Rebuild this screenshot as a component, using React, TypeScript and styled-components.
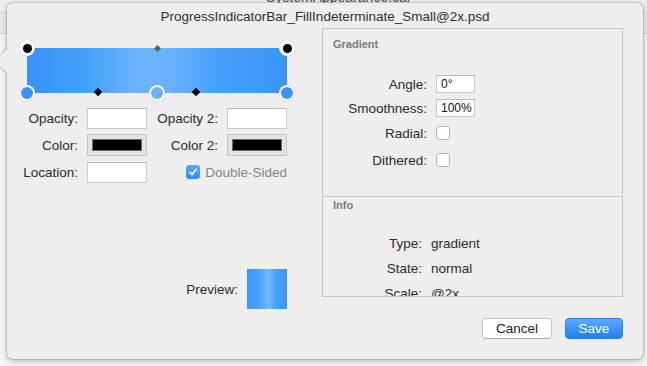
import React from "react";
import styled, { createGlobalStyle } from "styled-components";

const Global = createGlobalStyle`
  html, body { margin: 0; padding: 0; }
  body {
    width: 647px; height: 366px; overflow: hidden;
    background: #e4e4e4;
    font-family: "Liberation Sans", Arial, Helvetica, sans-serif;
    color: #2b2b2b;
  }
  #root { width: 647px; height: 366px; }
`;

const Stage = styled.div`
  position: relative;
  width: 647px;
  height: 366px;
  overflow: hidden;
  background: linear-gradient(#ececec 0 12px, #d6d6d6 12px 13px, #e9e9e9 13px 33px, #cfcfcf 33px 34px, #f4f4f4 34px);
`;

const BackdropTitle = styled.div`
  margin-top: -11px;
  padding-left: 266px;
  font-size: 14px;
  line-height: 16px;
  color: #4a4a4a;
`;

const Popover = styled.div`
  position: absolute;
  left: 7px;
  top: 3px;
  width: 636px;
  height: 356px;
  box-sizing: border-box;
  padding: 0 20px;
  background: #eeeeee;
  border-radius: 6px;
  box-shadow: 0 0 0 1px rgba(0,0,0,0.12), 0 2px 6px rgba(0,0,0,0.25);
  display: flex;
  flex-direction: column;
`;

const Arrow = styled.div`
  position: absolute;
  left: -8px;
  top: 49px;
  width: 18px;
  height: 18px;
  background: #eeeeee;
  transform: rotate(45deg);
  box-shadow: -1px 1px 2px rgba(0,0,0,0.18);
  border-radius: 2px;
  z-index: 0;
`;

const Title = styled.div`
  position: relative;
  height: 25px;
  line-height: 28px;
  text-align: center;
  font-size: 13.5px;
  color: #2e2e2e;
`;

const Body = styled.div`
  position: relative;
  display: flex;
  align-items: flex-start;
  gap: 35px;
`;

const LeftColumn = styled.div`
  width: 260px;
  display: flex;
  flex-direction: column;
`;

const BarWrap = styled.div`
  position: relative;
  margin-top: 20px;
  width: 260px;
  height: 45px;
`;

const Bar = styled.div`
  width: 100%;
  height: 100%;
  background: linear-gradient(90deg, #3a92f8 0%, #42a0fb 22%, #6db4fd 44%, #66b0fd 56%, #45a0fb 74%, #3b94f8 100%);
`;

const RingHandle = styled.div<{ $x: number; $y: number; $inner: string; $innerSize: number }>`
  position: absolute;
  left: ${(p) => p.$x - 8}px;
  top: ${(p) => p.$y - 8}px;
  width: 16px;
  height: 16px;
  border-radius: 50%;
  background: #ffffff;
  box-shadow: 0 0 1px rgba(0,0,0,0.35);
  display: flex;
  align-items: center;
  justify-content: center;
  &::after {
    content: "";
    width: ${(p) => p.$innerSize}px;
    height: ${(p) => p.$innerSize}px;
    border-radius: 50%;
    background: ${(p) => p.$inner};
  }
`;

const Diamond = styled.div<{ $x: number; $y: number; $color: string; $size: number }>`
  position: absolute;
  left: ${(p) => p.$x - p.$size / 2}px;
  top: ${(p) => p.$y - p.$size / 2}px;
  width: ${(p) => p.$size}px;
  height: ${(p) => p.$size}px;
  background: ${(p) => p.$color};
  transform: rotate(45deg);
`;

const FormGrid = styled.div`
  margin-top: 14px;
  display: grid;
  grid-template-columns: 60px 60px 80px 60px;
  grid-auto-rows: 22px;
  row-gap: 5px;
  align-items: center;
`;

const Label = styled.div`
  justify-self: end;
  white-space: nowrap;
  padding-right: 9px;
  font-size: 13.5px;
  color: #2b2b2b;
`;

const TextInput = styled.div<{ $w?: number; $h?: number }>`
  box-sizing: border-box;
  width: ${(p) => p.$w ?? 60}px;
  height: ${(p) => p.$h ?? 21}px;
  background: #ffffff;
  border: 1px solid #c9c9c9;
  border-top-color: #b9b9b9;
  font-size: 12px;
  line-height: ${(p) => (p.$h ?? 21) - 2}px;
  padding-left: 4px;
  color: #111;
`;

const ColorWell = styled.div`
  box-sizing: border-box;
  width: 60px;
  height: 22px;
  background: #e2e2e2;
  border: 1px solid #c4c4c4;
  padding: 4px;
  display: flex;
  &::after {
    content: "";
    flex: 1;
    background: #000;
    border: 1px solid #6a6a6a;
  }
`;

const CheckRow = styled.div`
  grid-column: 3 / 5;
  justify-self: end;
  display: flex;
  align-items: center;
  gap: 5px;
  font-size: 13.5px;
  color: #858585;
`;

const BlueCheck = styled.div`
  width: 14px;
  height: 14px;
  border-radius: 3px;
  background: linear-gradient(#5aa9fb, #2f8cf6);
  display: flex;
  align-items: center;
  justify-content: center;
`;

const PreviewRow = styled.div`
  margin-top: 86px;
  display: flex;
  justify-content: flex-end;
  align-items: center;
  gap: 9px;
  font-size: 13.5px;
`;

const PreviewSwatch = styled.div`
  width: 40px;
  height: 40px;
  background: linear-gradient(90deg, #3b95f9 0%, #4aa3fc 30%, #72b8fe 55%, #4aa3fc 70%, #3b96fa 100%);
`;

const InfoBox = styled.div`
  width: 301px;
  height: 269px;
  box-sizing: border-box;
  border: 1px solid #c6c6c6;
  display: flex;
  flex-direction: column;
  overflow: hidden;
`;

const Section = styled.div<{ $h?: number; $pt: number }>`
  box-sizing: border-box;
  ${(p) => (p.$h ? `height: ${p.$h}px; flex: none;` : "flex: 1; min-height: 0;")}
  padding-top: ${(p) => p.$pt}px;
  overflow: hidden;
  & + & { border-top: 1px solid #c6c6c6; }
`;

const SectionHeader = styled.div`
  padding-left: 10px;
  font-size: 11px;
  line-height: 13px;
  font-weight: bold;
  color: #7a7a7a;
`;

const PropGrid = styled.div<{ $labelW: number; $mt: number; $rows: string; $gap: number }>`
  margin-top: ${(p) => p.$mt}px;
  display: grid;
  grid-template-columns: ${(p) => p.$labelW}px 1fr;
  grid-template-rows: ${(p) => p.$rows};
  column-gap: 9px;
  row-gap: ${(p) => p.$gap}px;
  align-items: center;
  font-size: 13.5px;
`;

const PropLabel = styled.div`
  justify-self: end;
  white-space: nowrap;
`;

const PlainCheck = styled.div`
  box-sizing: border-box;
  width: 14px;
  height: 14px;
  border-radius: 3px;
  background: #fff;
  border: 1px solid #b4b4b4;
`;

const Footer = styled.div`
  margin-top: 9px;
  display: flex;
  justify-content: flex-end;
  gap: 13px;
`;

const Button = styled.button<{ $primary?: boolean; $w: number }>`
  width: ${(p) => p.$w}px;
  height: 21px;
  box-sizing: border-box;
  border-radius: 4px;
  font-family: inherit;
  font-size: 13.5px;
  padding: 0;
  line-height: 19px;
  cursor: default;
  ${(p) =>
    p.$primary
      ? `background: linear-gradient(#5eabfd, #1c80f5); color: #fff; border: 1px solid #2a80ea;`
      : `background: #fff; color: #222; border: 1px solid #c4c4c4; border-bottom-color: #aaaaaa;`}
`;

export default function App() {
  return (
    <>
      <Global />
      <Stage>
        <BackdropTitle>SystemAppearance.car</BackdropTitle>
        <Popover>
          <Arrow />
          <Title>ProgressIndicatorBar_FillIndeterminate_Small@2x.psd</Title>
          <Body>
            <LeftColumn>
              <BarWrap>
                <Bar />
                <RingHandle $x={0} $y={0} $inner="#000" $innerSize={9} />
                <RingHandle $x={260} $y={0} $inner="#000" $innerSize={9} />
                <Diamond $x={130} $y={0} $color="#5a5f66" $size={5} />
                <RingHandle $x={0} $y={45} $inner="#3a92f8" $innerSize={12} />
                <RingHandle $x={130} $y={45} $inner="#68b1fd" $innerSize={12} />
                <RingHandle $x={260} $y={45} $inner="#3b94f8" $innerSize={12} />
                <Diamond $x={71} $y={44} $color="#000" $size={6} />
                <Diamond $x={169} $y={44} $color="#000" $size={6} />
              </BarWrap>
              <FormGrid>
                <Label>Opacity:</Label>
                <TextInput />
                <Label>Opacity 2:</Label>
                <TextInput />
                <Label>Color:</Label>
                <ColorWell />
                <Label>Color 2:</Label>
                <ColorWell />
                <Label>Location:</Label>
                <TextInput />
                <CheckRow>
                  <BlueCheck>
                    <svg width="10" height="10" viewBox="0 0 10 10">
                      <path d="M2 5.2 L4.2 7.6 L8.2 2.2" fill="none" stroke="#fff" strokeWidth="1.6" strokeLinecap="round" strokeLinejoin="round" />
                    </svg>
                  </BlueCheck>
                  Double-Sided
                </CheckRow>
              </FormGrid>
              <PreviewRow>
                Preview:
                <PreviewSwatch />
              </PreviewRow>
            </LeftColumn>
            <InfoBox>
              <Section $h={167} $pt={9}>
                <SectionHeader>Gradient</SectionHeader>
                <PropGrid $labelW={104} $mt={24} $rows="18px 18px 20px 22px" $gap={6}>
                  <PropLabel>Angle:</PropLabel>
                  <TextInput $w={39} $h={18}>0°</TextInput>
                  <PropLabel>Smoothness:</PropLabel>
                  <TextInput $w={39} $h={18}>100%</TextInput>
                  <PropLabel>Radial:</PropLabel>
                  <PlainCheck />
                  <PropLabel>Dithered:</PropLabel>
                  <PlainCheck />
                </PropGrid>
              </Section>
              <Section $pt={2}>
                <SectionHeader>Info</SectionHeader>
                <PropGrid $labelW={99} $mt={19} $rows="25px 25px 25px" $gap={0}>
                  <PropLabel>Type:</PropLabel>
                  <div>gradient</div>
                  <PropLabel>State:</PropLabel>
                  <div>normal</div>
                  <PropLabel>Scale:</PropLabel>
                  <div>@2x</div>
                </PropGrid>
              </Section>
            </InfoBox>
          </Body>
          <Footer>
            <Button $w={70}>Cancel</Button>
            <Button $w={58} $primary>Save</Button>
          </Footer>
        </Popover>
      </Stage>
    </>
  );
}
